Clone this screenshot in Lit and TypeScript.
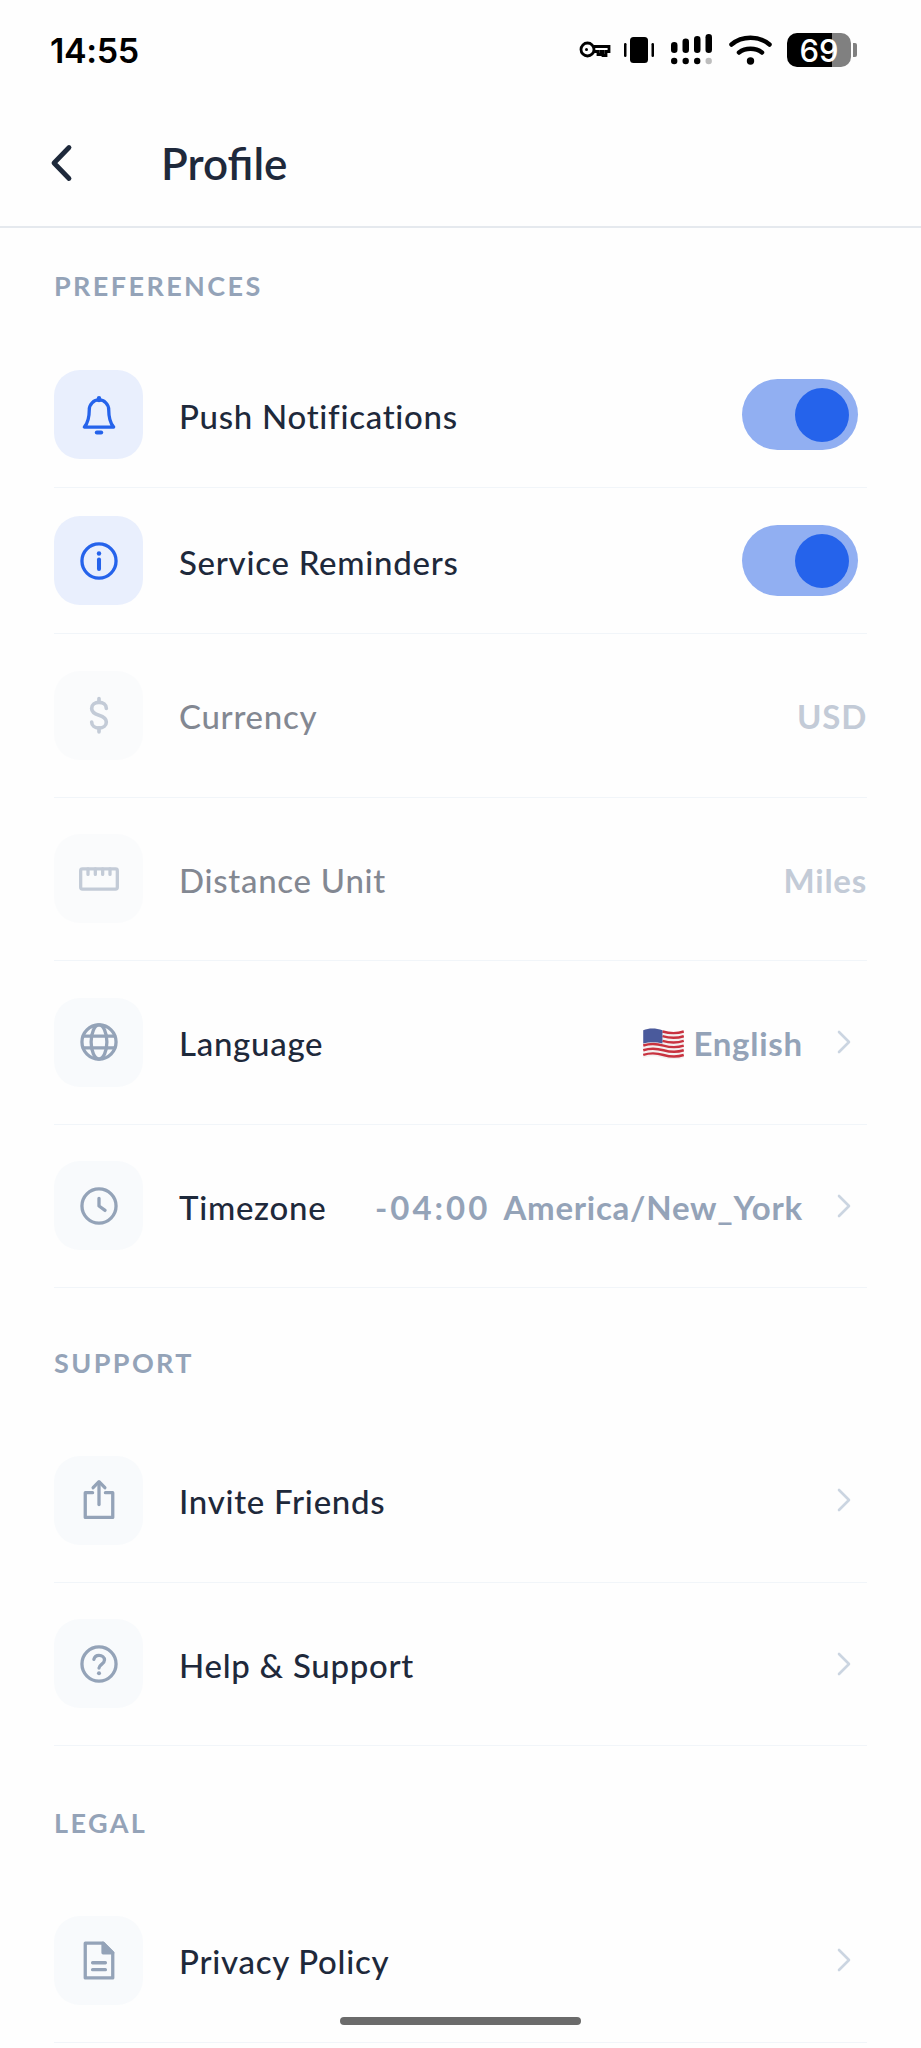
import { LitElement, html, css, svg } from "lit";
import { customElement } from "lit/decorators.js";

const icons: Record<string, unknown> = {
  bell: svg`<path d="M12 3.800a5.300 5.300 0 0 0-5.300 5.300c0 4.500-.6 7-2.700 9.500h16c-2.100-2.500-2.700-5-2.700-9.500A5.300 5.300 0 0 0 12 3.800Z"/><path d="M12 2.800v1" stroke-width="2.400"/><path d="M10.800 21.500h2.400" stroke-width="2.200"/>`,
  info: svg`<circle cx="12" cy="12" r="9.300"/><path d="M12 11.200v5.200" stroke-width="2.200"/><circle cx="12" cy="7.900" r="1.200" fill="currentColor" stroke="none"/>`,
  dollar: svg`<path d="M16 8.400c0-2-1.800-3.300-4-3.300s-4 1.300-4 3.300c0 2.100 1.800 3 4 3.700 2.300.7 4 1.700 4 3.700 0 2-1.800 3.400-4 3.400s-4-1.400-4-3.400" stroke-width="2"/><path d="M12 3v2M12 19v2.200" stroke-width="2"/>`,
  ruler: svg`<rect x="2" y="6.500" width="20" height="11" rx="1"/><path d="M6 6.500v3M10 6.500v3M14 6.500v3M18 6.500v3"/>`,
  globe: svg`<circle cx="12" cy="12" r="9.300"/><ellipse cx="12" cy="12" rx="4.300" ry="9.300"/><path d="M3.400 8.800h17.200M3.400 15.200h17.200"/>`,
  clock: svg`<circle cx="12" cy="12" r="9.300"/><path d="M12 7.800V12l3.300 2.400"/>`,
  share: svg`<path d="M8.500 8H4.500v13.500h15V8h-4"/><path d="M12 14.500V2.500"/><path d="M8.800 5.300 12 2l3.200 3.300" /> `,
  help: svg`<circle cx="12" cy="12" r="9.300"/><path d="M9.200 9.500A2.900 2.900 0 0 1 12 7.300c1.700 0 3 1.100 3 2.500 0 2.300-3 2.400-3 4.400"/><circle cx="12" cy="17" r="1.100" fill="currentColor" stroke="none"/>`,
  doc: svg`<path d="M4.500 2.800h9.700l5.300 5.300v13.700h-15Z"/><path d="M14.200 2.800v5.300h5.300Z" fill="currentColor"/><path d="M8.500 13.500h7M8.500 17.300h7"/>`,
};

type Row = { icon: string; label: string; blue?: boolean; toggle?: boolean; dim?: boolean; value?: unknown; chevron?: boolean; tall?: boolean };

const flag = html`<svg class="flag" viewBox="0 0 38 30" aria-hidden="true">
  <path d="M0 3c6-3 12-2 19 0s13 2 19 0v26c-6 2-12 2-19 0s-13-2-19 0Z" fill="#f4f0f0"/>
  <g fill="none" stroke="#c8323f" stroke-width="2.300">
    <path d="M18 4.200c7 2 14 2 20 0M18 8.600c7 2 14 2 20 0M18 13c7 2 14 2 20 0M0 17.400c6-2 12-2 19 0s13 2 19 0M0 21.800c6-2 12-2 19 0s13 2 19 0M0 26.200c6-2 12-2 19 0s13 2 19 0"/>
  </g>
  <path d="M0 3c6-2.500 12-2 18 0v12.500c-6-1.700-12-1.700-18 0Z" fill="#4a5a9c"/>
</svg>`;

const sections: { title: string; rows: Row[] }[] = [
  {
    title: "PREFERENCES",
    rows: [
      { icon: "bell", label: "Push Notifications", blue: true, toggle: true },
      { icon: "info", label: "Service Reminders", blue: true, toggle: true },
      { icon: "dollar", label: "Currency", dim: true, value: "USD", tall: true },
      { icon: "ruler", label: "Distance Unit", dim: true, value: "Miles", tall: true },
      { icon: "globe", label: "Language", value: html`${flag}<span>English</span>`, chevron: true, tall: true },
      { icon: "clock", label: "Timezone", value: html`<span class="tz">-04:00</span><span>America/New_York</span>`, chevron: true, tall: true },
    ],
  },
  {
    title: "SUPPORT",
    rows: [
      { icon: "share", label: "Invite Friends", chevron: true, tall: true },
      { icon: "help", label: "Help & Support", chevron: true, tall: true },
    ],
  },
  {
    title: "LEGAL",
    rows: [{ icon: "doc", label: "Privacy Policy", chevron: true, tall: true }],
  },
];

@customElement("app-root")
export class AppRoot extends LitElement {
  static styles = css`
    :host {
      display: block;
      position: relative;
      width: 921px;
      height: 2048px;
      overflow: hidden;
      background: #fefefe;
      font-family: "Lato", "Liberation Sans", sans-serif;
      color: #1e293b;
    }
    .status {
      height: 100px;
      display: flex;
      align-items: center;
      justify-content: space-between;
      padding: 0 64px 0 50px;
      box-sizing: border-box;
      color: #000;
    }
    .time {
      font-family: "Inter", sans-serif;
      font-weight: 600;
      font-size: 34px;
      letter-spacing: -0.4px;
    }
    .sys {
      display: flex;
      align-items: center;
    }
    .sys svg {
      display: block;
    }
    .vib {
      margin-left: 13px;
    }
    .sig {
      margin-left: 17px;
    }
    .wifi {
      margin-left: 16px;
    }
    .battery {
      display: flex;
      align-items: center;
      margin-left: 15px;
      gap: 2px;
    }
    .batt-body {
      width: 64px;
      height: 34px;
      border-radius: 10px;
      display: flex;
      align-items: center;
      justify-content: center;
      font-family: "Inter", sans-serif;
      font-size: 31px;
      font-weight: 500;
      color: #fff;
      background: linear-gradient(90deg, #000 0 45px, #808080 45px);
    }
    .batt-nub {
      width: 4px;
      height: 14px;
      border-radius: 0 2px 2px 0;
      background: #808080;
    }
    .header {
      height: 128px;
      display: flex;
      align-items: center;
      padding: 0 0 0 44px;
      gap: 85px;
      border-bottom: 2px solid #e5e9ee;
      box-sizing: border-box;
    }
    .back {
      width: 32px;
      height: 40px;
      color: #1e293b;
    }
    .title {
      font-size: 44px;
      font-weight: 600;
      letter-spacing: 0;
      color: #1e293b;
    }
    .main {
      padding: 0 54px;
    }
    .sec + .sec {
      margin-top: 17px;
    }
    .sec:last-child {
      margin-top: 19px;
    }
    .sec-title {
      height: 114px;
      padding-top: 44px;
      box-sizing: border-box;
      font-size: 27px;
      line-height: 28px;
      font-weight: 700;
      letter-spacing: 2.4px;
      color: #94a3b8;
    }
    .row {
      height: 146px;
      display: flex;
      align-items: center;
      box-sizing: border-box;
      border-bottom: 1.500px solid #f1f5f9;
    }
    .row.tall {
      height: 163.500px;
    }
    .ico {
      width: 89px;
      height: 89px;
      border-radius: 26px;
      display: flex;
      align-items: center;
      justify-content: center;
      background: #f8fafc;
      color: #94a3b8;
      flex: none;
    }
    .ico.blue {
      background: #e9effd;
      color: #2563eb;
    }
    .ico svg {
      width: 44px;
      height: 44px;
      fill: none;
      stroke: currentColor;
      stroke-width: 1.800;
      stroke-linecap: round;
      stroke-linejoin: round;
    }
    .label {
      margin: 2px 0 0 36px;
      font-size: 33px;
      font-weight: 500;
      letter-spacing: 0.72px;
      color: #1e293b;
      white-space: nowrap;
    }
    .value {
      margin: 2px 0 0 auto;
      display: flex;
      align-items: center;
      gap: 13px;
      font-size: 33px;
      font-weight: 700;
      letter-spacing: 0.75px;
      color: #94a3b8;
      white-space: nowrap;
    }
    .tz {
      letter-spacing: 3px;
    }
    .row.dim .ico,
    .row.dim .label,
    .row.dim .value {
      opacity: 0.55;
    }
    .flag {
      width: 41px;
      height: 32px;
      margin-right: -4px;
    }
    .chev {
      width: 16px;
      height: 26px;
      margin-right: 15px;
      color: #cbd5e1;
      flex: none;
    }
    .value + .chev {
      margin-left: 33px;
    }
    .label + .chev {
      margin-left: auto;
    }
    .track {
      margin-left: auto;
      margin-right: 9px;
      width: 116px;
      height: 71px;
      border-radius: 36px;
      background: #91aff2;
      display: flex;
      align-items: center;
      justify-content: flex-end;
      padding-right: 9px;
      box-sizing: border-box;
    }
    .knob {
      width: 54px;
      height: 54px;
      border-radius: 50%;
      background: #2563eb;
    }
    .home {
      position: absolute;
      left: 340px;
      top: 2017px;
      width: 241px;
      height: 8px;
      border-radius: 4px;
      background: #6b6b6b;
    }
  `;

  private renderRow(r: Row) {
    return html`<div class="row ${r.tall ? "tall" : ""} ${r.dim ? "dim" : ""}">
      <div class="ico ${r.blue ? "blue" : ""}"><svg viewBox="0 0 24 24" aria-hidden="true">${icons[r.icon]}</svg></div>
      <div class="label">${r.label}</div>
      ${r.value ? html`<div class="value">${r.value}</div>` : ""}
      ${r.chevron
        ? html`<svg class="chev" viewBox="0 0 16 26" fill="none" stroke="currentColor" stroke-width="2.600" stroke-linecap="round" stroke-linejoin="round"><path d="M3 3l10 10L3 23"/></svg>`
        : ""}
      ${r.toggle ? html`<div class="track"><div class="knob"></div></div>` : ""}
    </div>`;
  }

  render() {
    return html`
      <div class="status">
        <div class="time">14:55</div>
        <div class="sys">
          <svg width="32" height="20" viewBox="0 0 32 20" fill="none" stroke="#000" stroke-width="2.800">
            <circle cx="8.500" cy="9.500" r="6.500"/><circle cx="7.500" cy="9.500" r="1.500" fill="#000" stroke="none"/>
            <path d="M15 6.500h15v5h-3v4h-3v-4h-2v3h-3v-3h-4"/>
          </svg>
          <svg class="vib" width="30" height="26" viewBox="0 0 30 26" fill="#000">
            <rect x="6" y="0" width="18" height="26" rx="3.500"/><rect x="0" y="6" width="2.500" height="14" rx="1.200"/><rect x="27.500" y="6" width="2.500" height="14" rx="1.200"/>
          </svg>
          <svg class="sig" width="42" height="32" viewBox="0 0 42 32" fill="#000">
            <rect x="0" y="8" width="6.500" height="11" rx="3.200"/><rect x="11.500" y="4.500" width="6.500" height="14.500" rx="3.200"/><rect x="23" y="2" width="6.500" height="17" rx="3.200"/><rect x="34.500" y="0" width="6.500" height="19" rx="3.200"/>
            <circle cx="3.200" cy="27" r="3.200"/><circle cx="14.700" cy="27" r="3.200"/><circle cx="26.200" cy="27" r="3.200"/><circle cx="37.700" cy="27" r="3.200" fill="#bdbdbd"/>
          </svg>
          <svg class="wifi" width="43" height="30" viewBox="0 0 43 30" fill="none" stroke="#000" stroke-width="4.500" stroke-linecap="round">
            <path d="M2.500 9.500C13 .5 30 .5 40.500 9.500"/><path d="M10 17.500c6.500-5 16.500-5 23 0"/><circle cx="21.500" cy="26" r="3.700" fill="#000" stroke="none"/>
          </svg>
          <div class="battery">
            <div class="batt-body">69</div>
            <div class="batt-nub"></div>
          </div>
        </div>
      </div>
      <div class="header">
        <svg class="back" viewBox="0 0 32 40" fill="none" stroke="currentColor" stroke-width="4.800" stroke-linecap="round" stroke-linejoin="round"><path d="M25 4.500 10 20l15 15.500"/></svg>
        <div class="title">Profile</div>
      </div>
      <div class="main">
        ${sections.map(
          (s) => html`<div class="sec">
            <div class="sec-title">${s.title}</div>
            ${s.rows.map((r) => this.renderRow(r))}
          </div>`
        )}
      </div>
      <div class="home"></div>
    `;
  }
}
